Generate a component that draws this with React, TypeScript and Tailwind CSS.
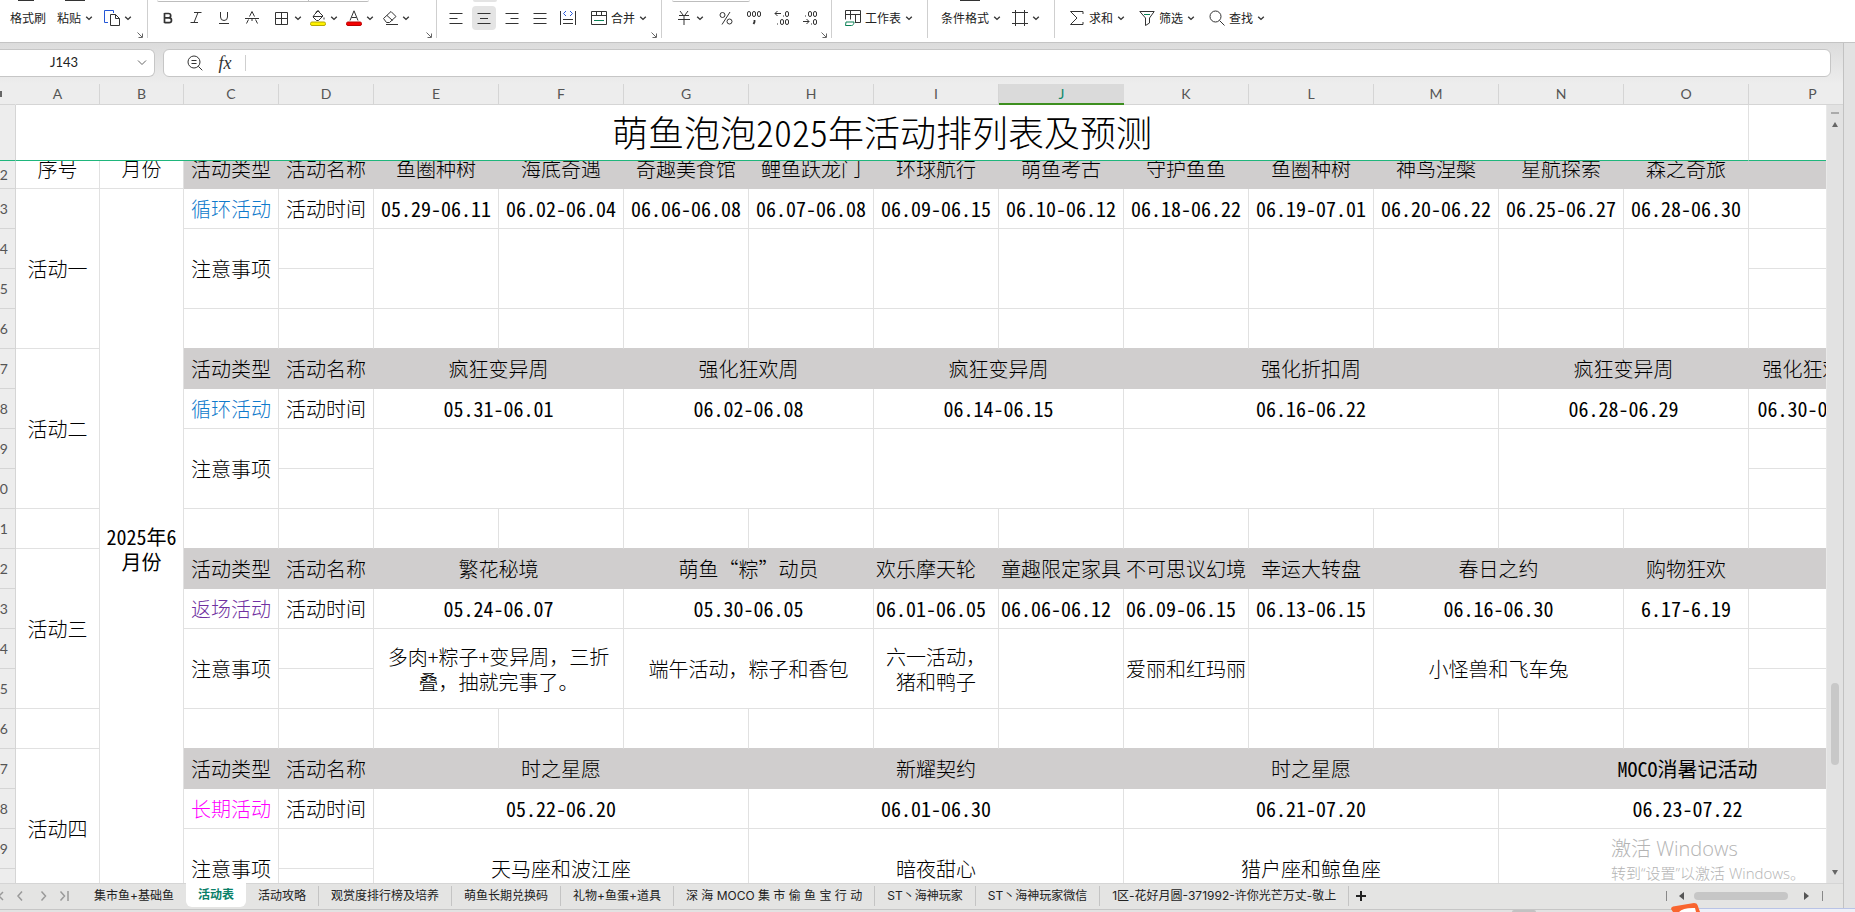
import type { ReactNode } from "react";

type Cell = {
  text?: string;
  col?: number;
  row?: number;
  tone?: "head" | "cycle" | "return" | "long";
  underHead?: boolean;
};

const COLUMNS = "ABCDEFGHIJKLMNOP".split("");

const tones = {
  head: "bg-[#d0cece] border-[#d0cece] text-black",
  cycle: "bg-white border-[#e1e1e1] text-[#0f7acb]",
  return: "bg-white border-[#e1e1e1] text-[#7030a0]",
  long: "bg-white border-[#e1e1e1] text-[#ff00ff]",
};

const head = (text = "", col = 1): Cell => ({ text, col, tone: "head" });
const cell = (text = "", col = 1, row = 1): Cell => ({ text, col, row });
const blanks = (count: number, underHead = false): Cell[] =>
  Array.from({ length: count }, () => ({ underHead }));

const ROWS: Cell[][] = [
  [
    cell("序号"),
    cell("月份"),
    head("活动类型"),
    head("活动名称"),
    head("鱼圈种树"),
    head("海底奇遇"),
    head("奇趣美食馆"),
    head("鲤鱼跃龙门"),
    head("环球航行"),
    head("萌鱼考古"),
    head("守护鱼鱼"),
    head("鱼圈种树"),
    head("神鸟涅槃"),
    head("星航探索"),
    head("森之奇旅"),
    head(),
  ],
  [
    cell("活动一", 1, 4),
    cell("2025年6\n月份", 1, 18),
    { text: "循环活动", tone: "cycle" },
    cell("活动时间"),
    cell("05.29-06.11"),
    cell("06.02-06.04"),
    cell("06.06-06.08"),
    cell("06.07-06.08"),
    cell("06.09-06.15"),
    cell("06.10-06.12"),
    cell("06.18-06.22"),
    cell("06.19-07.01"),
    cell("06.20-06.22"),
    cell("06.25-06.27"),
    cell("06.28-06.30"),
    cell(),
  ],
  [
    cell("注意事项", 1, 2),
    cell(),
    ...Array.from({ length: 11 }, () => cell("", 1, 2)),
    cell(),
  ],
  [cell(), cell()],
  blanks(14, true),
  [
    cell("活动二", 1, 4),
    head("活动类型"),
    head("活动名称"),
    head("疯狂变异周", 2),
    head("强化狂欢周", 2),
    head("疯狂变异周", 2),
    head("强化折扣周", 3),
    head("疯狂变异周", 2),
    head("强化狂欢周"),
  ],
  [
    { text: "循环活动", tone: "cycle" },
    cell("活动时间"),
    cell("05.31-06.01", 2),
    cell("06.02-06.08", 2),
    cell("06.14-06.15", 2),
    cell("06.16-06.22", 3),
    cell("06.28-06.29", 2),
    cell("06.30-07.06"),
  ],
  [
    cell("注意事项", 1, 2),
    cell(),
    cell("", 2, 2),
    cell("", 2, 2),
    cell("", 2, 2),
    cell("", 3, 2),
    cell("", 2, 2),
    cell(),
  ],
  [cell(), cell()],
  [cell(), ...blanks(14, true)],
  [
    cell("活动三", 1, 4),
    head("活动类型"),
    head("活动名称"),
    head("繁花秘境", 2),
    head("萌鱼“粽”动员", 2),
    head("欢乐摩天轮\u00a0\u00a0"),
    head("童趣限定家具"),
    head("不可思议幻境"),
    head("幸运大转盘"),
    head("春日之约", 2),
    head("购物狂欢"),
    head(),
  ],
  [
    { text: "返场活动", tone: "return" },
    cell("活动时间"),
    cell("05.24-06.07", 2),
    cell("05.30-06.05", 2),
    cell("06.01-06.05\u00a0"),
    cell("06.06-06.12\u00a0"),
    cell("06.09-06.15\u00a0"),
    cell("06.13-06.15"),
    cell("06.16-06.30", 2),
    cell("6.17-6.19"),
    cell(),
  ],
  [
    cell("注意事项", 1, 2),
    cell(),
    cell("多肉+粽子+变异周，三折\n叠，抽就完事了。", 2, 2),
    cell("端午活动，粽子和香包", 2, 2),
    cell("六一活动，\n猪和鸭子", 1, 2),
    cell("", 1, 2),
    cell("爱丽和红玛丽", 1, 2),
    cell("", 1, 2),
    cell("小怪兽和飞车兔", 2, 2),
    cell("", 1, 2),
    cell(),
  ],
  [cell(), cell()],
  [cell(), ...blanks(14, true)],
  [
    cell("活动四", 1, 4),
    head("活动类型"),
    head("活动名称"),
    head("时之星愿", 3),
    head("新耀契约", 3),
    head("时之星愿", 3),
    head("MOCO消暑记活动", 3),
  ],
  [
    { text: "长期活动", tone: "long" },
    cell("活动时间"),
    cell("05.22-06.20", 3),
    cell("06.01-06.30", 3),
    cell("06.21-07.20", 3),
    cell("06.23-07.22", 3),
  ],
  [
    cell("注意事项", 1, 2),
    cell(),
    cell("天马座和波江座", 3, 2),
    cell("暗夜甜心", 3, 2),
    cell("猎户座和鲸鱼座", 3, 2),
    cell("", 3, 2),
  ],
  [cell()],
];

const SHEETS = [
  "集市鱼+基础鱼",
  "活动表",
  "活动攻略",
  "观赏度排行榜及培养",
  "萌鱼长期兑换码",
  "礼物+鱼蛋+道具",
  "深 海 MOCO 集 市 偷 鱼 宝 行 动",
  "ST丶海神玩家",
  "ST丶海神玩家微信",
  "1区-花好月圆-371992-许你光芒万丈-敬上",
];

function Icon({ children, size = 16 }: { children: ReactNode; size?: number }) {
  return (
    <svg
      width={size}
      height={size}
      viewBox={`0 0 ${size} ${size}`}
      fill="none"
      stroke="#333"
      className="shrink-0"
      aria-hidden="true"
    >
      {children}
    </svg>
  );
}

function Caret() {
  return (
    <svg width="8" height="8" viewBox="0 0 8 8" fill="none" stroke="#333" strokeWidth="1.4" className="shrink-0">
      <path d="M1.2 2.8 4 5.4 6.8 2.8" />
    </svg>
  );
}

function Tool({
  label,
  text,
  icon,
  caret,
}: {
  label: string;
  text?: string;
  icon?: ReactNode;
  caret?: boolean;
}) {
  return (
    <button type="button" aria-label={label} className="flex h-6 items-center gap-1 px-1 whitespace-nowrap">
      {icon}
      {text && <span>{text}</span>}
      {caret && <Caret />}
    </button>
  );
}

function Square({ label, active, children }: { label: string; active?: boolean; children: ReactNode }) {
  return (
    <button type="button" aria-label={label} className="flex h-6 w-7 items-center justify-center">
      <span className={`flex h-6 w-6 items-center justify-center rounded ${active ? "bg-[#e4e4e4]" : ""}`}>
        {children}
      </span>
    </button>
  );
}

function Group({
  className,
  peek,
  launcher,
  children,
}: {
  className: string;
  peek?: ReactNode;
  launcher?: boolean;
  children: ReactNode;
}) {
  return (
    <div className={`relative h-[38px] shrink-0 border-r border-[#cfcfcf] ${className}`}>
      <div className="flex h-[2px]">{peek}</div>
      <div className="mt-1 flex items-center">{children}</div>
      {launcher && (
        <svg
          width="6"
          height="6"
          viewBox="0 0 6 6"
          fill="none"
          stroke="#666"
          className="absolute right-1 bottom-0"
        >
          <path d="M.5 .5 5 5M5.5 1.5V5.5H1.5" />
        </svg>
      )}
    </div>
  );
}

function Toolbar() {
  return (
    <div className="relative z-10 flex h-[43px] shrink-0 overflow-hidden border-b border-[#c4c4c4] bg-white text-[12px] leading-4 text-[#222]">
      <Group
        className="w-[148px] pl-[6px]"
        launcher
        peek={
          <>
            <span className="ml-3 h-px w-4 bg-[#333]" />
            <span className="ml-[31px] h-px w-5 bg-[#333]" />
          </>
        }
      >
        <Tool label="格式刷" text="格式刷" />
        <span className="w-[3px]" />
        <Tool label="粘贴" text="粘贴" caret />
        <span className="w-[3px]" />
        <Tool
          label="复制"
          caret
          icon={
            <Icon>
              <path d="M4 12.5H.5V.5h9V3" stroke="#2456d6" />
              <path d="M6.5 4.5h5l4 4v7h-9zM11.5 4.5v4h4" />
            </Icon>
          }
        />
      </Group>

      <Group
        className="w-[289px] pl-[6px]"
        launcher
        peek={
          <span className="ml-[3px] flex h-[2px] w-[212px] rounded-b border-b border-[#bdbdbd]">
            <span className="w-[152px] border-r border-[#bdbdbd]" />
          </span>
        }
      >
        <Square label="加粗">
          <Icon>
            <path d="M4.5 3v10M4.5 3.5h4a2.2 2.2 0 0 1 0 4.4h-4M4.5 7.9h4.6a2.4 2.4 0 0 1 0 4.8H4.5" strokeWidth="1.7" />
          </Icon>
        </Square>
        <Square label="倾斜">
          <Icon>
            <path d="M6 2.5h7.5M2.5 12.5H10M10 2.5 6 12.5" />
          </Icon>
        </Square>
        <Square label="下划线">
          <Icon>
            <path d="M4.5 2v5a3.5 3.5 0 0 0 7 0V2M3 13.5h10" />
          </Icon>
        </Square>
        <Square label="删除线">
          <Icon>
            <path d="M5.5 6.5 8 1.5l2.5 5M4.5 9.5 2.5 13.5M11.5 9.5l2 4M1 8.5h14M8 9v2" />
          </Icon>
        </Square>
        <span className="w-1" />
        <Tool
          label="边框"
          caret
          icon={
            <Icon>
              <path d="M1.5 2.5h12v12h-12zM7.5 2.5v12M1.5 8.5h12" />
            </Icon>
          }
        />
        <Tool
          label="填充颜色"
          caret
          icon={
            <Icon>
              <path d="M4.5 4.5 8 1l5 5-4.5 4.5H6.5L3 7zM3 6.5h9.5M6 3a2 2 0 0 1 3.5-1.5M14 7.5v2" />
              <rect x=".5" y="12" width="15" height="3.5" rx="1.5" fill="#fff200" stroke="#b8a800" />
            </Icon>
          }
        />
        <Tool
          label="字体颜色"
          caret
          icon={
            <Icon>
              <path d="M4 10.5 8 .8l4 9.7M5.5 7.5h5" />
              <rect x=".5" y="12" width="15" height="3.5" rx="1.5" fill="#f40000" stroke="#b00" />
            </Icon>
          }
        />
        <Tool
          label="清除"
          caret
          icon={
            <Icon>
              <path d="M1.5 8.5 9 1.5l5 5-6.500 6h-3zM5 5.500l5.500 5M4 14.500h12" />
            </Icon>
          }
        />
      </Group>

      <Group
        className="w-[225px] pl-[5px]"
        launcher
        peek={<span className="ml-[31px] h-[2px] w-6 rounded-b bg-[#e4e4e4]" />}
      >
        <Square label="左对齐">
          <Icon>
            <path d="M1.5 3.5h13M1.5 8.5h8M1.5 13.5h13" />
          </Icon>
        </Square>
        <Square label="居中" active>
          <Icon>
            <path d="M1.5 3.5h13M4 8.5h8M1.5 13.5h13" />
          </Icon>
        </Square>
        <Square label="右对齐">
          <Icon>
            <path d="M1.5 3.5h13M6.5 8.5h8M1.5 13.5h13" />
          </Icon>
        </Square>
        <Square label="两端对齐">
          <Icon>
            <path d="M1.5 3.5h13M1.5 8.5h13M1.5 13.5h13" />
          </Icon>
        </Square>
        <Square label="分散对齐">
          <Icon>
            <path d="M.5 1v14M15.5 1v14M3 9.5h10M3 13.5h10" />
            <path d="M6 1 3.5 3.5 6 6M10 1l2.5 2.5L10 6" stroke="#2456d6" />
          </Icon>
        </Square>
        <span className="w-[5px]" />
        <Tool
          label="合并"
          text="合并"
          caret
          icon={
            <Icon>
              <path d="M.5 1.5h15v13H.5zM.5 5.5h15M5.5 1.5v4M10.5 1.5v4" />
              <path d="M3 10.5h10" stroke="#0a8055" />
            </Icon>
          }
        />
      </Group>

      <Group
        className="w-[170px] pl-[10px]"
        launcher
        peek={<span className="h-[2px] w-[78px] rounded-b border-b border-[#bdbdbd]" />}
      >
        <Tool
          label="货币格式"
          caret
          icon={
            <Icon>
              <path d="M4 1l3 4M12 1 9 5M3 5.5h10M2 9.5h12M8 5.5V15" />
            </Icon>
          }
        />
        <span className="w-1" />
        <Square label="百分比">
          <Icon>
            <circle cx="4.5" cy="5" r="2.5" />
            <circle cx="11.5" cy="11.5" r="2.5" />
            <path d="M12 2 4 14.5" />
          </Icon>
        </Square>
        <Square label="千位分隔">
          <Icon>
            <rect x="1.5" y="1.5" width="3" height="5" rx="1.5" />
            <rect x="6.5" y="1.5" width="3" height="5" rx="1.5" />
            <rect x="11.5" y="1.5" width="3" height="5" rx="1.5" />
            <path d="M8.5 10v2L7.5 14" strokeWidth="1.8" />
          </Icon>
        </Square>
        <Square label="增加小数位">
          <Icon>
            <path d="M7 3.5H1M3.5 1 1 3.5 3.5 6M9 6h1M3 14h1" />
            <rect x="11.5" y="1.5" width="3" height="5" rx="1.5" />
            <rect x="6.5" y="9.5" width="3" height="5" rx="1.5" />
            <rect x="11.5" y="9.5" width="3" height="5" rx="1.5" />
          </Icon>
        </Square>
        <Square label="减少小数位">
          <Icon>
            <path d="M1 11.5h6M4.5 9 7 11.5 4.5 14M3 6h1M9 14h1" />
            <rect x="6.5" y="1.5" width="3" height="5" rx="1.5" />
            <rect x="11.5" y="1.5" width="3" height="5" rx="1.5" />
            <rect x="11.5" y="9.5" width="3" height="5" rx="1.5" />
          </Icon>
        </Square>
      </Group>

      <Group className="w-24 pl-[9px]">
        <Tool
          label="工作表"
          text="工作表"
          caret
          icon={
            <Icon>
              <path d="M.5 9.5v-9h15v12H10M.5 4.5h15M5.5 .5v9M10.5 4.5v8" />
              <path d="M1 12h8c0 2-1 3.5-2.5 3.5H.5z" stroke="#0a8055" />
            </Icon>
          }
        />
      </Group>

      <Group className="w-[127px] pl-[9px]" peek={<span className="ml-[23px] h-px w-5 bg-[#333]" />}>
        <Tool label="条件格式" text="条件格式" caret />
        <span className="w-[3px]" />
        <Tool
          label="行和列"
          caret
          icon={
            <Icon>
              <path d="M0 2.500h16M0 13.500h16M3.500 0v16M12.500 0v16" />
            </Icon>
          }
        />
      </Group>

      <div className="flex gap-[6px] pt-[6px] pl-[10px]">
        <Tool
          label="求和"
          text="求和"
          caret
          icon={
            <Icon>
              <path d="M14 4V1.5H1.5L8 8 1.5 14.5H14V12" />
            </Icon>
          }
        />
        <Tool
          label="筛选"
          text="筛选"
          caret
          icon={
            <Icon>
              <path d="M.8 1.5h14.4L10.5 8v5l-4 2.5V8z" />
              <path d="M5 4.5h6" stroke="#0a8055" />
            </Icon>
          }
        />
        <Tool
          label="查找"
          text="查找"
          caret
          icon={
            <Icon>
              <circle cx="6.5" cy="6.5" r="5.5" />
              <path d="m10.5 10.5 5 5" />
            </Icon>
          }
        />
      </div>
    </div>
  );
}

function FormulaBar() {
  return (
    <div className="flex h-[41px] shrink-0 items-start gap-2 bg-linear-to-b from-[#dcdcdc] to-[#ededed] pt-[6px] pr-3">
      <div className="flex h-7 w-[155px] items-center rounded-r-md border border-l-0 border-[#c6c6c6] bg-white">
        <input
          aria-label="名称框"
          defaultValue="J143"
          className="w-[128px] bg-transparent text-center font-[Lato,sans-serif] text-[13px] text-[#222] outline-none"
        />
        <button type="button" aria-label="展开名称框" className="ml-2">
          <svg width="12" height="8" viewBox="0 0 12 8" fill="none" stroke="#666">
            <path d="M2 1.5 6 5.5l4-4" />
          </svg>
        </button>
      </div>
      <div className="flex h-7 flex-1 items-center rounded-md border border-[#c6c6c6] bg-white">
        <button type="button" aria-label="缩小" className="ml-[23px]">
          <Icon>
            <circle cx="7" cy="7" r="6" />
            <path d="M4.5 5.5h5M4.5 8.5h5M11.3 11.3l4 4" />
          </Icon>
        </button>
        <button
          type="button"
          aria-label="插入函数"
          className="ml-[14px] w-4 font-['Liberation_Serif',serif] text-[18px] leading-6 text-[#333] italic"
        >
          fx
        </button>
        <span className="ml-3 h-4 border-l border-[#cfcfcf]" />
        <input aria-label="编辑栏" className="h-full flex-1 bg-transparent px-2 text-[14px] outline-none" />
      </div>
    </div>
  );
}

function ColumnWidths() {
  return (
    <colgroup>
      <col className="w-4" />
      <col span={2} className="w-[84px]" />
      <col span={2} className="w-[95px]" />
      <col span={11} className="w-[125px]" />
      <col className="w-[128px]" />
    </colgroup>
  );
}

function FrozenPane() {
  return (
    <table className="w-[1877px] table-fixed border-separate border-spacing-0">
      <ColumnWidths />
      <thead>
        <tr className="h-[21px] font-[Lato,sans-serif] text-[14px] leading-4 text-[#555]">
          <th className="border-r border-b border-r-transparent border-b-[#d5d5d5] p-0">
            <span className="block h-[6px] w-[2px] bg-[#666]" />
          </th>
          {COLUMNS.map((name) => (
            <th
              key={name}
              scope="col"
              className={
                name === "J"
                  ? "border-b-2 border-[#3d8f1f] bg-[#dadada] p-0 font-normal text-[#0f8a6c]"
                  : "border-r border-b border-[#d5d5d5] p-0 font-normal"
              }
            >
              {name}
            </th>
          ))}
        </tr>
      </thead>
      <tbody>
        <tr className="h-14">
          <th className="border-r border-b border-r-[#d5d5d5] border-b-[#1fb67c] p-0" />
          <td
            colSpan={15}
            className="border-r border-b border-r-[#e1e1e1] border-b-[#1fb67c] bg-white p-0 pb-1 text-center text-[36px] leading-10"
          >
            萌鱼泡泡2025年活动排列表及预测
          </td>
          <td className="border-b border-[#1fb67c] bg-white p-0" />
        </tr>
      </tbody>
    </table>
  );
}

function ScheduleCell({ item }: { item: Cell }) {
  const text = item.text ?? "";
  const color = item.tone ? tones[item.tone] : "border-[#e1e1e1] bg-white text-black";
  // half-width digits, but full-width punctuation in the notes
  const forms = text.includes("，") ? "[font-feature-settings:normal]" : "[font-feature-settings:'hwid']";
  const weight = /^[\dM]/.test(text) ? "font-normal" : "font-light";

  return (
    <td
      colSpan={item.col ?? 1}
      rowSpan={item.row ?? 1}
      className={`border-r border-b p-0 text-center leading-[25px] whitespace-pre ${color} ${forms} ${weight} ${
        item.underHead ? "border-b-[#d0cece]" : ""
      }`}
    >
      {text}
    </td>
  );
}

function ScheduleTable() {
  return (
    <table className="-mt-3 w-[1877px] table-fixed border-separate border-spacing-0">
      <ColumnWidths />
      <tbody>
        {ROWS.map((cells, index) => (
          <tr key={index} className="h-10">
            <th
              scope="row"
              className={`border-r border-b border-[#d5d5d5] p-0 font-[Lato,sans-serif] text-[14px] leading-4 font-normal text-[#555] ${
                index === 0 ? "pt-3" : ""
              }`}
            >
              <span className="flex justify-end pr-[7px]">{122 + index}</span>
            </th>
            {cells.map((item, i) => (
              <ScheduleCell key={i} item={item} />
            ))}
          </tr>
        ))}
      </tbody>
    </table>
  );
}

function VerticalScrollbar() {
  return (
    <div className="flex w-[17px] shrink-0 flex-col items-center border-l border-[#e9e9e9] bg-[#e2e2e2] pt-[7px]">
      <span className="h-[2px] w-2 bg-[#aaa]" />
      <button type="button" aria-label="向上滚动" className="mt-2">
        <svg width="6" height="5" viewBox="0 0 6 5" fill="#666">
          <path d="M3 0 6 5H0z" />
        </svg>
      </button>
      <span className="flex-[556]" />
      <span className="w-2 flex-[82] rounded bg-[#c8c8c8]" />
      <span className="flex-[105]" />
      <button type="button" aria-label="向下滚动" className="mb-2">
        <svg width="6" height="5" viewBox="0 0 6 5" fill="#666">
          <path d="M3 5 6 0H0z" />
        </svg>
      </button>
    </div>
  );
}

function SheetTabs() {
  return (
    <div className="flex h-[27px] shrink-0 border-t border-b border-t-[#d5d5d5] border-b-[#c6c6c6] bg-[#e4e4e3] font-[Inter,'Noto_Sans_CJK_SC',sans-serif] text-[12px] leading-4 text-[#222]">
      <div className="flex h-6 w-[82px] shrink-0 items-center">
        <svg width="70" height="12" viewBox="0 0 70 12" fill="none" stroke="#999" strokeWidth="1.5">
          <path d="M3 2-1 6l4 4M22 1.5 18 6l4 4.5M41.5 1.5l4 4.5-4 4.5M60.5 1.5l4 4.5-4 4.5M68 1v10" />
        </svg>
      </div>
      {SHEETS.map((name, index) =>
        name === "活动表" ? (
          <button
            key={name}
            type="button"
            className="-mt-px h-6 rounded-b-md bg-white px-3 font-bold text-[#0a8068]"
          >
            {name}
          </button>
        ) : (
          <div key={name} className="flex h-6 items-center">
            <button type="button" className="px-3 whitespace-nowrap">
              {name}
            </button>
            {index > 1 && <span className="h-5 border-l border-[#c4c4c4]" />}
          </div>
        ),
      )}
      <button type="button" aria-label="新建工作表" className="ml-[6px] flex h-6 items-center">
        <svg width="12" height="12" viewBox="0 0 12 12" fill="none" stroke="#222" strokeWidth="2">
          <path d="M6 1v10M1 6h10" />
        </svg>
      </button>
      <div className="mr-5 ml-auto flex h-6 items-center">
        <span className="h-[10px] border-l border-[#888]" />
        <button type="button" aria-label="向左滚动" className="ml-3">
          <svg width="5" height="8" viewBox="0 0 5 8" fill="#555">
            <path d="M0 4 5 0v8z" />
          </svg>
        </button>
        <span className="ml-[10px] h-2 w-[94px] rounded bg-[#c6c6c6]" />
        <button type="button" aria-label="向右滚动" className="ml-4">
          <svg width="5" height="8" viewBox="0 0 5 8" fill="#555">
            <path d="M5 4 0 0v8z" />
          </svg>
        </button>
        <span className="ml-[13px] h-[10px] border-l border-[#888]" />
      </div>
    </div>
  );
}

export default function App() {
  return (
    <div className="relative flex h-screen flex-col overflow-hidden bg-[#e2e2e2] font-['Noto_Sans_CJK_SC',sans-serif]">
      <Toolbar />
      <div className="flex min-h-0 flex-1">
        <div className="flex min-w-0 flex-1 flex-col bg-[#ededed]">
          <FormulaBar />
          <div className="flex min-h-0 flex-1">
            <main className="flex min-w-0 flex-1 flex-col overflow-hidden text-[20px] font-light text-black [font-feature-settings:'hwid']">
              <FrozenPane />
              <div className="min-h-0 flex-1 overflow-hidden">
                <ScheduleTable />
              </div>
            </main>
            <div className="flex flex-col">
              <div className="h-[21px] shrink-0 border-b border-[#d5d5d5]" />
              <div className="flex min-h-0 flex-1">
                <VerticalScrollbar />
              </div>
            </div>
          </div>
          <SheetTabs />
        </div>
        <div className="w-3 shrink-0 border-l border-[#c2c2c2] bg-[#e2e2e2]" />
      </div>
      <div className="flex h-[2px] shrink-0">
        <span className="ml-auto h-[2px] w-6 rounded-t bg-[#c2c2c2]" />
        <span className="w-[319px]" />
      </div>

      <div className="pointer-events-none absolute right-[49px] bottom-[29px] w-[195px] font-['Open_Sans','Noto_Sans_CJK_SC',sans-serif] whitespace-nowrap text-[#b4b4b4]">
        <p className="text-[20px] leading-7 font-light">激活 Windows</p>
        <p className="text-[15px] leading-5 font-light">转到“设置”以激活 Windows。</p>
      </div>
      <div className="absolute right-0 bottom-0 h-1 w-[156px] border-t border-[#b9c3e6] bg-[#eef0f8]" />
      <svg className="absolute right-[154px] bottom-0" width="30" height="9" viewBox="0 0 30 9">
        <path d="M0 6Q0 4 2 3.5L23 0Q26 0 26.5 2L29 9H2z" fill="#f9652f" />
        <path d="M8 9Q12 4.5 24 5l1 4z" fill="#fff" />
      </svg>
    </div>
  );
}
